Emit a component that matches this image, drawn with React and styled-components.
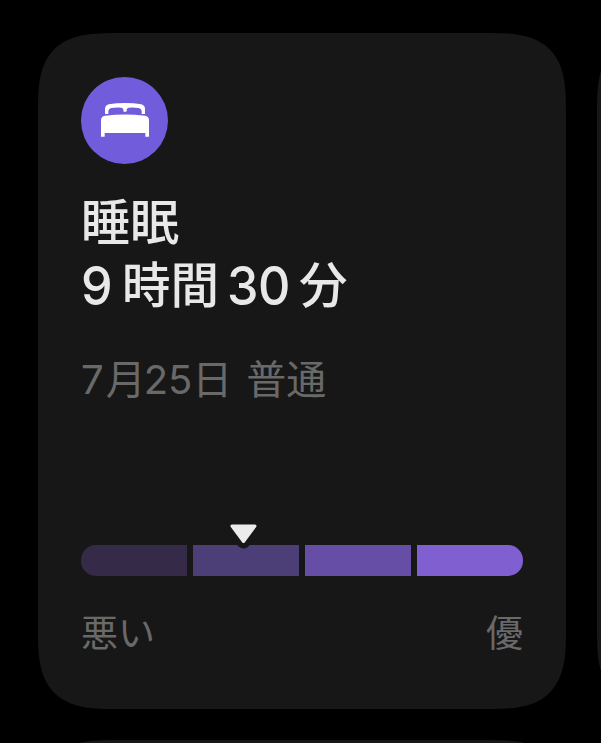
import styled, { createGlobalStyle } from "styled-components";

const GlobalStyle = createGlobalStyle`
  body {
    margin: 0;
    background: #000;
    overflow: hidden;
  }
`;

const Page = styled.div`
  width: 601px;
  height: 743px;
  padding: 33px 0 0 37.5px;
  box-sizing: border-box;
  overflow: hidden;
  display: grid;
  grid-template-columns: 528.5px 528.5px;
  grid-template-rows: 676px 676px;
  gap: 31px;
  font-family: Inter, "Noto Sans CJK JP", sans-serif;
`;

const Card = styled.div`
  display: flex;
  flex-direction: column;
  box-sizing: border-box;
  padding: 44px 43px 0 43.5px;
  background: #171717;
  border-radius: 80px;
  corner-shape: superellipse(1.6);
`;

const IconCircle = styled.div`
  width: 87px;
  height: 87px;
  border-radius: 50%;
  background: #715cdb;
  display: flex;
  align-items: center;
  justify-content: center;

  svg {
    display: block;
    margin: -2px 0 0 1px;
  }
`;

const Title = styled.div`
  margin-top: 27px;
  height: 63px;
  line-height: 64px;
  font-size: 49px;
  font-weight: 500;
  color: #e8e8e8;
  white-space: nowrap;
`;

const Duration = styled.div`
  display: flex;
  height: 64px;
  line-height: 64px;
  font-weight: 500;
  color: #e8e8e8;
  white-space: nowrap;
`;

const Digits = styled.span`
  width: ${(props) => props.$width}px;
  font-size: 54px;
  letter-spacing: -0.5px;
  transform: scaleX(0.93);
  transform-origin: left;
`;

const Unit = styled.span`
  font-size: 48.5px;
  margin-right: 8px;
`;

const Summary = styled.div`
  display: flex;
  margin-top: 37px;
  height: 50px;
  line-height: 50px;
  font-size: 40px;
  font-weight: 400;
  color: #696969;
`;

const Part = styled.span`
  margin-right: ${(props) => props.$gap || 0}px;
`;

const Gauge = styled.div`
  position: relative;
  margin-top: 140px;
  display: flex;
  gap: 6.3px;
  height: 31px;
`;

const Segment = styled.div`
  flex: 1;
  background: ${(props) => props.$color};

  &:first-child {
    border-radius: 15px 0 0 15px;
  }
  &:nth-child(4) {
    border-radius: 0 15px 15px 0;
  }
`;

const Marker = styled.svg`
  position: absolute;
  left: 143px;
  top: -27px;
`;

const Labels = styled.div`
  display: flex;
  justify-content: space-between;
  margin-top: 34px;
  height: 48px;
  line-height: 48px;
  font-size: 37px;
  color: #696969;
`;

const colors = ["#362a49", "#4c3e76", "#664da5", "#805fd1"];

const BedIcon = () => (
  <svg width="48" height="34" viewBox="0 0 144 102" fill="#fff">
    <path d="M12 33V18Q12 7 23 4Q45 0 72 0Q99 0 121 4Q132 7 132 18V33H122V24Q121 17 113 15Q96 12 83 14Q77 15 77 20V25Q72 28 67 25V20Q67 15 61 14Q48 12 31 15Q23 17 22 24V33Z" />
    <path d="M0 101V51Q0 40 12 38Q72 31 132 38Q144 40 144 51V101H133V90H11V101Z" />
  </svg>
);

const App = () => {
  return (
    <>
      <GlobalStyle />
      <Page>
        <Card>
          <IconCircle>
            <BedIcon />
          </IconCircle>
          <Title>睡眠</Title>
          <Duration>
            <Digits $width={41}>9</Digits>
            <Unit>時間</Unit>
            <Digits $width={72}>30</Digits>
            <Unit>分</Unit>
          </Duration>
          <Summary>
            <Part $gap={2}>7</Part>
            <Part $gap={-2}>月</Part>
            <Part>25</Part>
            <Part $gap={14}>日</Part>
            <Part>普通</Part>
          </Summary>
          <Gauge>
            {colors.map((color) => (
              <Segment key={color} $color={color} />
            ))}
            <Marker width="40" height="36" viewBox="0 0 40 36">
              <path
                d="M8 8H31L19.5 23.5Z"
                fill="#171717"
                stroke="#171717"
                strokeWidth="14"
                strokeLinejoin="round"
              />
              <path
                d="M8 8H31L19.5 23.5Z"
                fill="#ececec"
                stroke="#ececec"
                strokeWidth="3"
                strokeLinejoin="round"
              />
            </Marker>
          </Gauge>
          <Labels>
            <span>悪い</span>
            <span>優</span>
          </Labels>
        </Card>
        <Card />
        <Card />
        <Card />
      </Page>
    </>
  );
};

export default App;
